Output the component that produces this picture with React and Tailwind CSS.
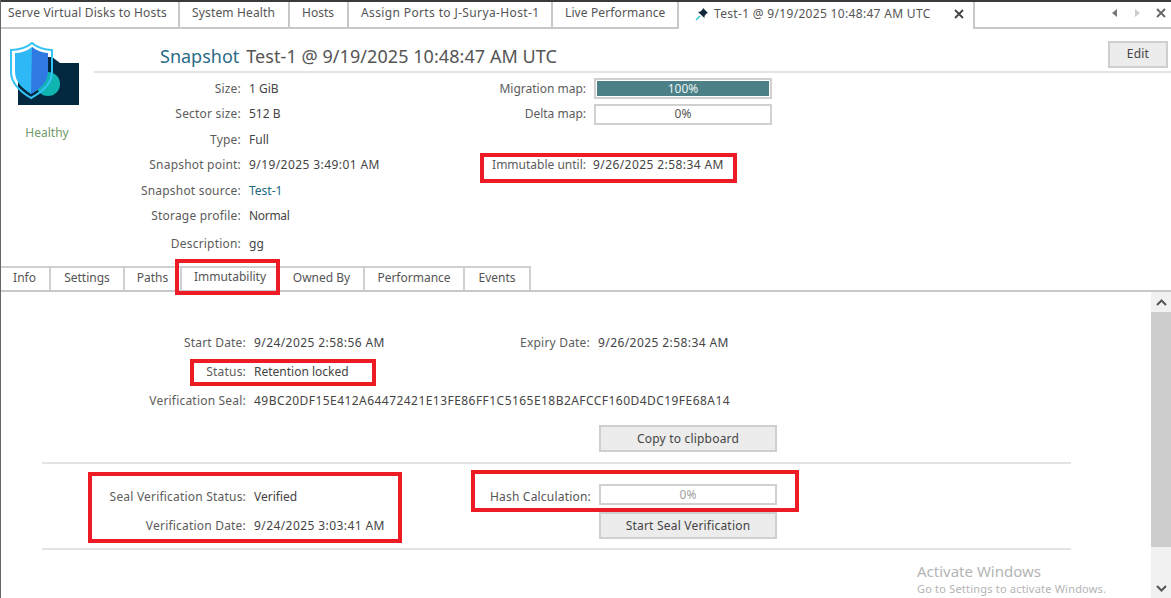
import React from "react";

const FONT = "font-['Noto_Sans','Open_Sans',sans-serif]";

function TopTab({ w, children, active }) {
  return (
    <div className={`flex h-full shrink-0 items-center border-r-2 border-[#c8c8c8] pb-[3px] ${w} ${active ? "bg-white" : "border-b-2 bg-white"}`}>
      {children}
    </div>
  );
}

function Row({ label, labelW, h, tight, children }) {
  return (
    <div className={`flex items-center ${h}`}>
      <div className={`shrink-0 whitespace-nowrap text-right text-[#5c5c5c] ${tight ? "" : "tracking-[0.2px]"} ${labelW}`}>{label}</div>
      <div className="ml-2 whitespace-nowrap text-[#444]">{children}</div>
    </div>
  );
}

function Num({ children }) {
  return <span className="tracking-[0.42px]">{children}</span>;
}

function Bar({ value, fill, muted }) {
  return (
    <div className="relative flex h-[21px] w-[178px] items-center justify-center border-2 border-[#d0d0d0] bg-white">
      {fill && <div className="absolute inset-0 border border-white bg-[#4c8087]" />}
      <span className={`relative ${fill ? "text-[#e8f2f2]" : muted ? "text-[#a0a0a0]" : "text-[#555]"}`}>{value}</span>
    </div>
  );
}

function Btn({ children, className = "" }) {
  return (
    <button className={`flex h-[27px] items-center justify-center border-2 border-[#cfcfcf] bg-[#ececec] tracking-[0.2px] text-[#444] ${className}`}>
      {children}
    </button>
  );
}

function Logo() {
  return (
    <svg width="72" height="66" viewBox="0 0 72 66">
      <path d="M8 63 V15 H42 L50 21 H69 V63 Z" fill="#02293f" />
      <circle cx="38" cy="42" r="12" fill="#0fb5b0" />
      <path d="M22 1 C28 6 35 8 42 8 V30 C42 42 32 50 21 56 C11 50 1 42 1 30 V8 C8 8 16 6 22 1 Z" fill="none" stroke="#35c2f7" strokeWidth="2" />
      <path d="M22 5 C27 9 33 11 38 11 V30 C38 40 30 47 21 52 C13 47 5 40 5 30 V11 C11 11 17 9 22 5 Z" fill="#2fb8f6" />
      <path d="M22 5 C27 9 33 11 38 11 V30 C38 40 30 47 21 52 Z" fill="#2f7ae0" />
    </svg>
  );
}

function Pin() {
  return (
    <svg width="14" height="14" viewBox="0 0 14 14">
      <path d="M1 13 L5 9" stroke="#2fc6d0" strokeWidth="1.4" />
      <path d="M8 1 L13 6 L11.5 6.5 L9.5 9 L9.5 11 L3 5 L5.5 4.5 L7.5 2.5 Z" fill="#12263a" />
    </svg>
  );
}

function X({ size = 10, color = "#444" }) {
  return (
    <svg width={size} height={size} viewBox="0 0 10 10">
      <path d="M1 1 L9 9 M9 1 L1 9" stroke={color} strokeWidth="1.8" />
    </svg>
  );
}

const innerTabs = [
  ["Info", "w-[51px] pb-[2px]"],
  ["Settings", "w-[74px] pb-[2px]"],
  ["Paths", "w-[57px] pb-[2px]"],
  ["Immutability", "w-[98px] pb-[4px]"],
  ["Owned By", "w-[85px] pb-[2px]"],
  ["Performance", "w-[100px] pb-[2px]"],
  ["Events", "w-[66px] pb-[2px]"],
];

function RedBox({ className }) {
  return <div className={`pointer-events-none absolute border-4 border-[#ed1c24] ${className}`} />;
}

export default function App() {
  const rowH = "h-[25.5px]";
  return (
    <div className={`relative h-[598px] w-[1171px] overflow-hidden bg-white text-[12px] leading-none ${FONT}`}>
      {/* top dark strip */}
      <div className="h-[2px] bg-[#3a3a3a]" />

      {/* document tabs */}
      <div className="flex h-[27px] text-[#555]">
        <TopTab w="w-[180px] pl-2"><span className="tracking-[0.18px]">Serve Virtual Disks to Hosts</span></TopTab>
        <TopTab w="w-[110px] pl-3"><span className="tracking-[0.15px]">System Health</span></TopTab>
        <TopTab w="w-[59px] pl-3">Hosts</TopTab>
        <TopTab w="w-[204px] pl-3"><span className="tracking-[0.37px]">Assign Ports to J-Surya-Host-1</span></TopTab>
        <TopTab w="w-[126px] pl-3"><span className="tracking-[0.12px]">Live Performance</span></TopTab>
        <TopTab w="w-[296px] pl-4" active>
          <Pin />
          <span className="ml-[5px] whitespace-nowrap tracking-[0.32px]">Test-1 @ 9/19/2025 10:48:47 AM UTC</span>
          <span className="ml-[23px]"><X /></span>
        </TopTab>
        <div className="flex flex-1 items-center justify-end gap-[16px] border-b-2 border-[#c8c8c8] pb-[3px] pr-[5px]">
          <svg width="6" height="8" viewBox="0 0 6 8"><path d="M5 0 V8 L0 4 Z" fill="#777" /></svg>
          <svg width="6" height="8" viewBox="0 0 6 8"><path d="M1 0 V8 L6 4 Z" fill="#ccc" /></svg>
          <X size={10} color="#666" />
        </div>
      </div>

      {/* snapshot header */}
      <div className="flex h-[237px]">
        <div className="w-[94px] shrink-0">
          <div className="ml-[10px] mt-[13px] h-[66px]"><Logo /></div>
          <div className="mt-[19px] text-center text-[#6f9a6a]">Healthy</div>
        </div>
        <div className="flex-1">
          <div className="flex h-[44px] items-center justify-between border-b-2 border-[#e4e4e4] pl-[66px] pr-[3px]">
            <div className="mt-[11px] whitespace-nowrap text-[18px] text-[#555]">
              <span className="text-[#2a6c88]">Snapshot</span>
              <span className="ml-[7px] tracking-[0.06px]">Test-1 @ 9/19/2025 10:48:47 AM UTC</span>
            </div>
            <Btn className="mt-[8px] h-[25px] w-[60px]">Edit</Btn>
          </div>
          <div className="mt-[3px] flex">
            <div className="w-[386px] shrink-0">
              <Row h={rowH} labelW="w-[147px]" label="Size:">1 GiB</Row>
              <Row h={rowH} labelW="w-[147px]" label="Sector size:">512 B</Row>
              <Row h={rowH} labelW="w-[147px]" label="Type:">Full</Row>
              <Row h={rowH} labelW="w-[147px]" label="Snapshot point:"><Num>9/19/2025 3:49:01 AM</Num></Row>
              <Row h={rowH} labelW="w-[147px]" label="Snapshot source:"><span className="text-[#1d6a80]">Test-1</span></Row>
              <Row h={rowH} labelW="w-[147px]" label="Storage profile:"><span className="-tracking-[0.3px]">Normal</span></Row>
              <Row h="h-[29px]" labelW="w-[147px]" label="Description:">gg</Row>
            </div>
            <div>
              <Row h={rowH} tight labelW="w-[106px]" label="Migration map:"><Bar value="100%" fill /></Row>
              <Row h={rowH} tight labelW="w-[106px]" label="Delta map:"><Bar value="0%" /></Row>
              <div className={rowH} />
              <Row h={rowH} tight labelW="w-[106px]" label="Immutable until:"><span className="-ml-[1px] tracking-[0.42px]">9/26/2025 2:58:34 AM</span></Row>
            </div>
          </div>
        </div>
      </div>

      {/* inner tabs */}
      <div className="flex h-[26px] border-b-2 border-[#c8c8c8] text-[#555]">
        {innerTabs.map(([t, w]) => (
          <div key={t} className={`flex items-center justify-center border-r-2 border-t-2 border-[#d0d0d0] ${w}`}>{t}</div>
        ))}
      </div>

      {/* body */}
      <div className="flex h-[306px]">
        <div className="flex-1 pt-[36px]">
          <div className="flex">
            <div className="w-[509px] shrink-0">
              <Row h="h-[29px]" labelW="w-[246px]" label="Start Date:"><Num>9/24/2025 2:58:56 AM</Num></Row>
            </div>
            <Row h="h-[29px]" labelW="w-[81px]" label="Expiry Date:"><Num>9/26/2025 2:58:34 AM</Num></Row>
          </div>
          <Row h="h-[29px]" labelW="w-[246px]" label="Status:">Retention locked</Row>
          <Row h="h-[29px]" labelW="w-[246px]" label="Verification Seal:"><span className="tracking-[0.45px]">49BC20DF15E412A64472421E13FE86FF1C5165E18B2AFCCF160D4DC19FE68A14</span></Row>
          <div className="mt-[10px] pl-[599px]"><Btn className="w-[178px]">Copy to clipboard</Btn></div>
          <div className="ml-[42px] mt-[10px] h-[2px] w-[1029px] bg-[#e4e4e4]" />
          <div className="mt-[18px] flex">
            <div className="w-[472px] shrink-0">
              <Row h="h-[29px]" labelW="w-[246px]" label="Seal Verification Status:">Verified</Row>
              <Row h="h-[29px]" labelW="w-[246px]" label="Verification Date:"><Num>9/24/2025 3:03:41 AM</Num></Row>
            </div>
            <div className="mt-[2px] flex items-start">
              <div className="mt-[7px] w-[119px] whitespace-nowrap text-right tracking-[0.2px] text-[#555]">Hash Calculation:</div>
              <div className="ml-2 flex flex-col gap-[7px]">
                <Bar value="0%" muted />
                <Btn className="w-[178px]">Start Seal Verification</Btn>
              </div>
            </div>
          </div>
          <div className="ml-[42px] mt-[8px] h-[2px] w-[1029px] bg-[#e4e4e4]" />
        </div>

        {/* scrollbar */}
        <div className="flex w-[20px] shrink-0 flex-col bg-[#f1f1f1]">
          <div className="flex h-[20px] items-center justify-center">
            <svg width="11" height="7" viewBox="0 0 11 7"><path d="M1 6 L5.5 1.5 L10 6" fill="none" stroke="#555" strokeWidth="2" /></svg>
          </div>
          <div className="h-[235px] bg-[#cdcdcd]" />
          <div className="flex-1" />
          <div className="flex h-[20px] items-center justify-center">
            <svg width="11" height="7" viewBox="0 0 11 7"><path d="M1 1 L5.5 5.5 L10 1" fill="none" stroke="#555" strokeWidth="2" /></svg>
          </div>
        </div>
      </div>

      {/* left window edge */}
      <div className="absolute bottom-0 left-0 top-0 w-[1px] bg-[#666]" />

      {/* watermark */}
      <div className="pointer-events-none absolute left-[917px] top-[564px] text-[#b4b4b4]">
        <div className="text-[15px]">Activate Windows</div>
        <div className="mt-[4px] text-[11px] tracking-[0.2px]">Go to Settings to activate Windows.</div>
      </div>

      {/* annotations */}
      <RedBox className="left-[480px] top-[153px] h-[30px] w-[257px]" />
      <RedBox className="left-[175px] top-[259px] h-[36px] w-[105px]" />
      <RedBox className="left-[190px] top-[359px] h-[27px] w-[186px]" />
      <RedBox className="left-[88px] top-[472px] h-[71px] w-[314px]" />
      <RedBox className="left-[471px] top-[470px] h-[42px] w-[328px]" />
    </div>
  );
}
